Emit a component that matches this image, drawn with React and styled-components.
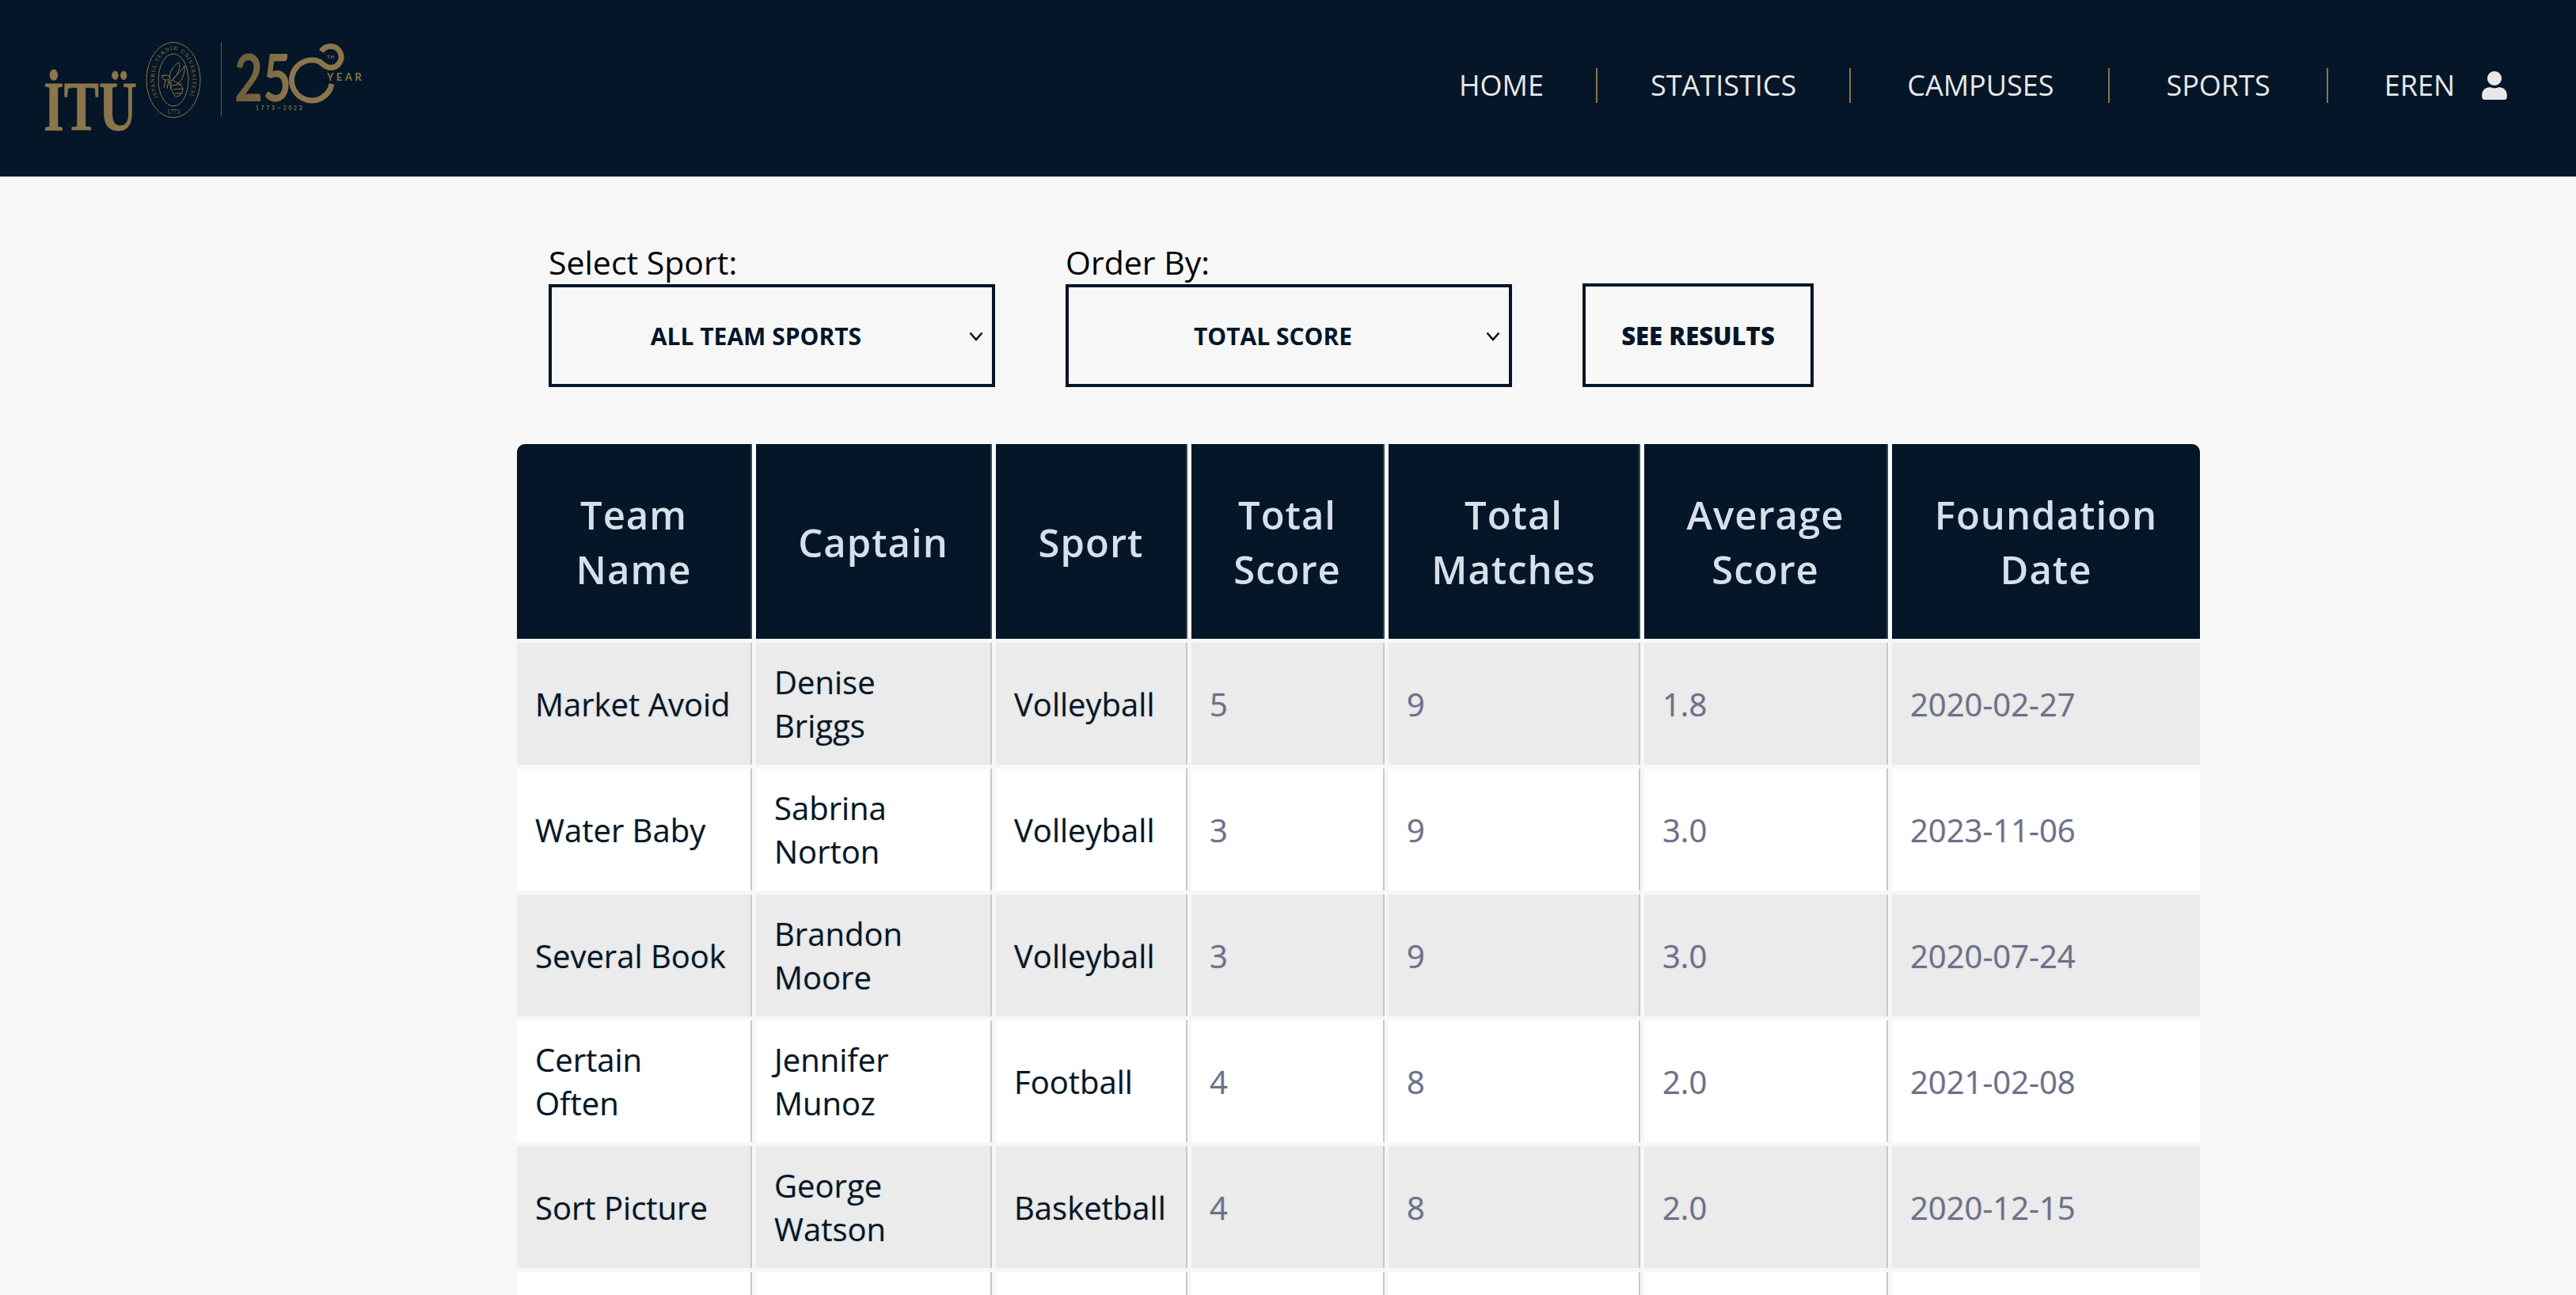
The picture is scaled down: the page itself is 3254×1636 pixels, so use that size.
import React from "react";
import styled, { createGlobalStyle } from "styled-components";
import { FaUser } from "react-icons/fa";

const NAV_ITEMS = [
  { label: "HOME", left: 69, right: 66 },
  { label: "STATISTICS", left: 67, right: 67 },
  { label: "CAMPUSES", left: 71, right: 69 },
  { label: "SPORTS", left: 71, right: 71 },
];

const COLUMNS = [
  { label: "Team Name", width: 297 },
  { label: "Captain", width: 298 },
  { label: "Sport", width: 242 },
  { label: "Total Score", width: 244 },
  { label: "Total Matches", width: 318 },
  { label: "Average Score", width: 308 },
  { label: "Foundation Date", width: 389 },
];

const TEAMS = [
  ["Market Avoid", "Denise Briggs", "Volleyball", "5", "9", "1.8", "2020-02-27"],
  ["Water Baby", "Sabrina Norton", "Volleyball", "3", "9", "3.0", "2023-11-06"],
  ["Several Book", "Brandon Moore", "Volleyball", "3", "9", "3.0", "2020-07-24"],
  ["Certain Often", "Jennifer Munoz", "Football", "4", "8", "2.0", "2021-02-08"],
  ["Sort Picture", "George Watson", "Basketball", "4", "8", "2.0", "2020-12-15"],
  ["", "", "", "", "", "", ""],
];

const Logo = () => (
  <LogoSvg viewBox="50 50 410 120" role="img" aria-label="ITU 250th year">
    <defs>
      <linearGradient id="gold" x1="0" x2="1" y1="0" y2="0">
        <stop offset="0" stopColor="#6e5a39" />
        <stop offset="1" stopColor="#8c764c" />
      </linearGradient>
      <path id="sealArc" d="M199.4 121 A24 38 0 1 1 238.6 121" />
    </defs>

    <text x="55" y="162" fontFamily="'Liberation Serif', serif" fontWeight="700" fontSize="88" fill="#8b754b" stroke="#8b754b" strokeWidth="0.8" textLength="118" lengthAdjust="spacingAndGlyphs">İTÜ</text>

    <ellipse cx="219" cy="99" rx="34" ry="47.5" fill="none" stroke="#8b754b" strokeWidth="1" />
    <ellipse cx="219" cy="99" rx="19" ry="33" fill="none" stroke="#8b754b" strokeWidth="1" />
    <text fontFamily="'Liberation Serif', serif" fontSize="7" fill="#8b754b">
      <textPath href="#sealArc" textLength="140">İSTANBUL TEKNİK ÜNİVERSİTESİ</textPath>
    </text>
    <text x="219" y="142" textAnchor="middle" fontFamily="'Liberation Serif', serif" fontSize="8" fill="#8b754b">1773</text>
    {/* bee */}
    <g fill="none" stroke="#8b754b" strokeWidth="1">
      <path d="M214 97 C214 88 220 80 226 77 C229 82 225 92 218 99" />
      <path d="M218 98 C224 92 231 86 233 81 C234 90 230 100 225 103" />
      <ellipse cx="210" cy="96" rx="5" ry="3" />
      <path d="M214 99 C218 99 228 103 231 110 C231 117 226 120 222 120 C218 116 214 106 214 99Z" />
      <path d="M217 106 L230 104 M219 111 L231 110 M221 116 L230 116" />
      <path d="M209 99 L207 109 M213 100 L211 110 M216 101 L216 111 M204 94 L208 93" />
    </g>

    <line x1="279.5" y1="52" x2="279.5" y2="145" stroke="#6f5f41" strokeWidth="1" />

    <text x="296" y="126" fontFamily="Lato, sans-serif" fontWeight="700" fontSize="82" fill="url(#gold)" textLength="72" lengthAdjust="spacingAndGlyphs">25</text>
    <path d="M419 104 A25.5 25.5 0 1 1 404 76 C410 81 413 83.5 418 83.5 A13.5 13.5 0 1 0 406 63" fill="none" stroke="#8b754b" strokeWidth="7" />
    <text x="413" y="72" fontFamily="Lato, sans-serif" fontWeight="700" fontSize="6" letterSpacing="1" fill="#8b754b">TH</text>
    <text x="413" y="100" fontFamily="Lato, sans-serif" fontWeight="700" fontSize="13" letterSpacing="3.4" fill="#8b754b">YEAR</text>
    <text x="323" y="137" fontFamily="Lato, sans-serif" fontWeight="700" fontSize="6.5" letterSpacing="2.9" fill="#8b754b">1773—2023</text>
  </LogoSvg>
);

const Chevron = () => (
  <ChevronIcon viewBox="0 0 18 12" aria-hidden="true">
    <path d="M1.5 1.5 L9 10 L16.5 1.5" fill="none" stroke="#041627" strokeWidth="2.6" />
  </ChevronIcon>
);

export default function App() {
  return (
    <>
      <GlobalStyle />
      <Header>
        <Logo />
        <Nav>
          {NAV_ITEMS.map((item) => (
            <NavItem key={item.label} $left={item.left} $right={item.right}>
              {item.label}
            </NavItem>
          ))}
          <UserItem $left={71} $right={0}>
            EREN
            <FaUser size={36} />
          </UserItem>
        </Nav>
      </Header>
      <Main>
        <Filters>
          <Field>
            <FieldLabel htmlFor="sport">Select Sport:</FieldLabel>
            <SelectBox>
              <Select id="sport" defaultValue="all">
                <option value="all">ALL TEAM SPORTS</option>
              </Select>
              <Chevron />
            </SelectBox>
          </Field>
          <Field>
            <FieldLabel htmlFor="order">Order By:</FieldLabel>
            <SelectBox>
              <Select id="order" defaultValue="score">
                <option value="score">TOTAL SCORE</option>
              </Select>
              <Chevron />
            </SelectBox>
          </Field>
          <ResultsButton type="button">SEE RESULTS</ResultsButton>
        </Filters>
        <Table>
          <thead>
            <tr>
              {COLUMNS.map((col) => (
                <HeadCell key={col.label} $width={col.width}>
                  {col.label}
                </HeadCell>
              ))}
            </tr>
          </thead>
          <tbody>
            {TEAMS.map((team, rowIndex) => (
              <Row key={rowIndex}>
                {team.map((value, colIndex) => (
                  <Cell key={colIndex} $muted={colIndex > 2}>
                    {value}
                  </Cell>
                ))}
              </Row>
            ))}
          </tbody>
        </Table>
      </Main>
    </>
  );
}

const GlobalStyle = createGlobalStyle`
  html, body {
    margin: 0;
    height: 100%;
    overflow: hidden;
    background: #f7f7f7;
    font-family: "Open Sans", "Noto Sans", sans-serif;
  }
`;

const Header = styled.header`
  height: 223px;
  padding: 0 85px 0 50px;
  box-sizing: border-box;
  background: #041627;
  display: flex;
  align-items: center;
  justify-content: space-between;
`;

const LogoSvg = styled.svg`
  width: 410px;
  height: 120px;
`;

const Nav = styled.nav`
  display: flex;
  align-items: center;
  padding-bottom: 8px;
`;

const NavItem = styled.a`
  height: 44px;
  padding: 0 ${(props) => props.$right}px 0 ${(props) => props.$left}px;
  display: flex;
  align-items: center;
  border-right: 2px solid #8b754b;
  color: #e8e8e8;
  font-size: 36px;
`;

const UserItem = styled(NavItem)`
  border-right: 0;
  gap: 32px;
`;

const Main = styled.main`
  padding: 0 0 0 648px;
`;

const Filters = styled.div`
  display: flex;
  align-items: flex-end;
  padding: 0 0 0 45px;
  margin-top: 86px;
  gap: 89px;
  height: 180px;
`;

const Field = styled.div`
  display: flex;
  flex-direction: column;
`;

const FieldLabel = styled.label`
  color: #000;
  font-size: 41px;
  line-height: 56px;
`;

const SelectBox = styled.div`
  position: relative;
  display: flex;
`;

const ChevronIcon = styled.svg`
  position: absolute;
  right: 15px;
  top: 60px;
  width: 18px;
  height: 12px;
  pointer-events: none;
`;

const Select = styled.select`
  width: 564px;
  height: 130px;
  box-sizing: border-box;
  padding: 0 40px 0 0;
  border: 4px solid #041627;
  border-radius: 0;
  appearance: none;
  background: #f7f7f7;
  color: #041627;
  font-family: "Open Sans", sans-serif;
  font-size: 30px;
  font-weight: 700;
  text-align: center;
`;

const ResultsButton = styled.button`
  width: 292px;
  height: 131px;
  box-sizing: border-box;
  padding: 0;
  border: 4px solid #041627;
  background: #f7f7f7;
  color: #041627;
  font-family: "Open Sans", sans-serif;
  font-size: 31px;
  font-weight: 800;
`;

const Table = styled.table`
  margin-top: 67px;
  width: 2136px;
  table-layout: fixed;
  border-collapse: separate;
  border-spacing: 5px;
`;

const HeadCell = styled.th`
  width: ${(props) => props.$width}px;
  height: 246px;
  box-sizing: border-box;
  padding: 2px 24px 0;
  background: #041627;
  border-right: 2px solid #3a4654;
  box-shadow: 5px 0 0 #fff;
  color: #d6e0ea;
  font-size: 49px;
  font-weight: 600;
  line-height: 69px;
  letter-spacing: 1px;
  text-align: center;

  &:first-child {
    border-top-left-radius: 10px;
  }
  &:last-child {
    border-right: 0;
    border-top-right-radius: 10px;
    box-shadow: none;
  }
`;

const Row = styled.tr`
  &:nth-child(odd) td {
    background: #ebebeb;
  }
`;

const Cell = styled.td`
  height: 154px;
  box-sizing: border-box;
  padding: 0 24px 0 23px;
  background: #fff;
  border-right: 2px solid #c6c6d6;
  color: ${(props) => (props.$muted ? "#6b6f8a" : "#041627")};
  font-size: 40px;
  line-height: 55px;
  text-shadow: 0 0 2px rgba(0, 0, 0, 0.2);

  &:last-child {
    border-right: 0;
  }
`;
